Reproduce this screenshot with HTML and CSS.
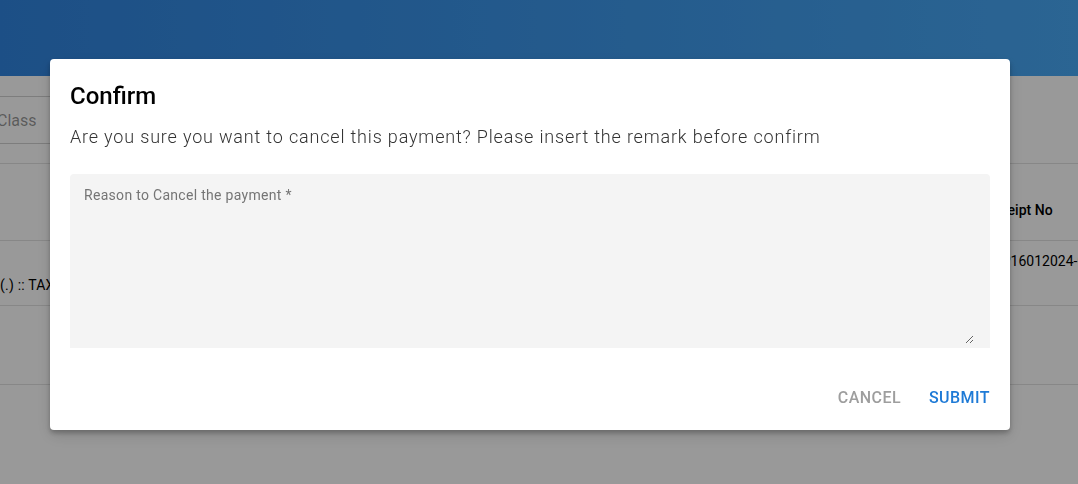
FILE: index.html
```html
<!DOCTYPE html>
<html lang="en">
<head>
  <meta charset="UTF-8">
  <title>Payments</title>
  <link rel="stylesheet" href="styles.css">
</head>
<body>

  <!-- App bar -->
  <header class="app-bar"></header>

  <!-- Page content -->
  <main class="page">
    <div class="filters">
      <div class="filter-field">
        <span class="filter-label">Class</span>
      </div>
    </div>

    <div class="payments-table">
      <div class="table-row table-head">
        <div class="cell cell-student"></div>
        <div class="cell cell-receipt">Receipt No</div>
      </div>
      <div class="table-row">
        <div class="cell cell-student cell-low">(.) :: TAX FEE</div>
        <div class="cell cell-receipt">RCP16012024-0012</div>
      </div>
      <div class="table-row table-row-tall">
        <div class="cell cell-student"></div>
        <div class="cell cell-receipt"></div>
      </div>
    </div>
  </main>

  <!-- Confirm dialog -->
  <div class="overlay">
    <div class="dialog">
      <h2 class="dialog-title">Confirm</h2>
      <p class="dialog-text">Are you sure you want to cancel this payment? Please insert the remark before confirm</p>

      <div class="remark-field">
        <label class="remark-label" for="remark">Reason to Cancel the payment *</label>
        <textarea id="remark" class="remark-input"></textarea>
      </div>

      <div class="dialog-actions">
        <button class="btn btn-cancel">Cancel</button>
        <button class="btn btn-submit">Submit</button>
      </div>
    </div>
  </div>

</body>
</html>
```

FILE: styles.css
```css
body {
  margin: 0;
  font-family: Roboto, "Liberation Sans", Arial, sans-serif;
  background-color: #fff;
  color: #000;
  overflow: hidden;
}

.app-bar {
  height: 76px;
  background: linear-gradient(to right, #3084df, #48a8f5);
}

/* Filters */
.filters {
  margin-top: 20px;
}

.filter-field {
  height: 46px;
  border-top: 1px solid #d0d0d0;
  border-bottom: 1px solid #d0d0d0;
  display: flex;
  align-items: center;
  width: 400px;
}

.filter-label {
  font-size: 16px;
  color: rgba(0,0,0,0.42);
  margin-left: -3px;
}

/* Table */
.payments-table {
  margin-top: 19px;
  border-top: 1px solid #e2e2e2;
  font-size: 14px;
  line-height: 20px;
}

.table-row {
  display: grid;
  grid-template-columns: 984px 1fr;
  height: 64px;
  border-bottom: 1px solid #e2e2e2;
}

.table-head {
  height: 76px;
  font-weight: 500;
  align-items: end;
}

.table-head .cell {
  padding-bottom: 20px;
}

.table-row-tall {
  height: 78px;
}

.cell {
  white-space: nowrap;
  overflow: hidden;
  padding-top: 10px;
}

.table-head .cell {
  padding-top: 0;
}

.table-row .cell-low {
  padding-top: 34px;
  letter-spacing: 0.2px;
}

/* Dialog */
.overlay {
  position: fixed;
  inset: 0;
  background-color: rgba(0,0,0,0.4);
  display: flex;
  justify-content: center;
  align-items: flex-start;
  padding-top: 59px;
  padding-right: 18px;
}

.dialog {
  width: 920px;
  background-color: #fff;
  border-radius: 4px;
  padding: 20px 20px 14px;
  box-shadow: 0 3px 5px rgba(0,0,0,0.25), 0 6px 16px rgba(0,0,0,0.12);
}

.dialog-title {
  margin: 0;
  font-size: 24px;
  font-weight: 500;
  line-height: 34px;
  color: #000;
}

.dialog-text {
  margin: 10px 0 0;
  font-size: 18px;
  font-weight: 300;
  line-height: 28px;
  letter-spacing: 0.82px;
  color: #333;
}

.remark-field {
  margin-top: 23px;
  height: 174px;
  box-sizing: border-box;
  padding: 11px 14px 2px;
  background-color: #f4f4f4;
  border-radius: 4px 4px 0 0;
  display: flex;
  flex-direction: column;
}

.remark-label {
  font-size: 14px;
  line-height: 20px;
  letter-spacing: 0.3px;
  color: #757575;
}

.remark-input {
  flex: 1;
  border: none;
  outline: none;
  background: transparent;
  resize: vertical;
  font-family: inherit;
  font-size: 16px;
  padding: 0;
  margin-right: 2px;
  margin-bottom: 2px;
}

.dialog-actions {
  margin-top: 32px;
  display: flex;
  justify-content: flex-end;
  gap: 28px;
}

.btn {
  background: none;
  border: none;
  padding: 0;
  font-family: inherit;
  font-size: 16px;
  font-weight: 500;
  line-height: 36px;
  text-transform: uppercase;
  letter-spacing: 0.45px;
  cursor: pointer;
}

.btn-cancel {
  color: #9e9e9e;
}

.btn-submit {
  color: #1e7ad6;
}
```
